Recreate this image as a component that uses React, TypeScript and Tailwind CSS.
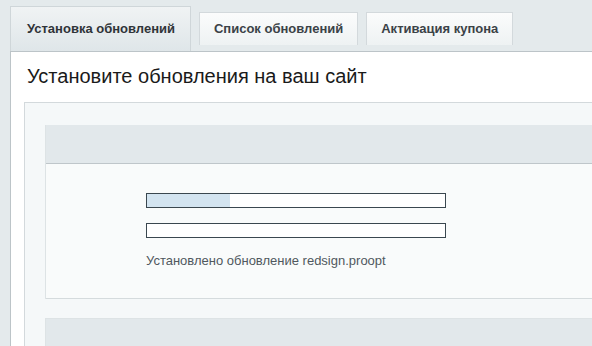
import React from "react";

const tabs = [
  { label: "Установка обновлений", active: true },
  { label: "Список обновлений", active: false },
  { label: "Активация купона", active: false },
];

function ProgressBar({ percent }: { percent: number }) {
  return (
    <div className="w-[300px] h-[15px] border border-[#3a474f] bg-white">
      <div className="h-full bg-[#d3e4f0]" style={{ width: `${percent}%` }} />
    </div>
  );
}

export default function App() {
  return (
    <div className="w-full h-[346px] overflow-hidden bg-[#e4eaec] pt-[6px] font-['Liberation_Sans',Arial,sans-serif]">
      {/* tabs */}
      <div className="flex items-start pl-[10px] gap-[7px] h-[45px]">
        {tabs.map((t) =>
          t.active ? (
            <div
              key={t.label}
              className="h-[45px] pl-[16px] pr-[15px] flex items-center border border-b-0 border-[#cfd6d9] bg-gradient-to-b from-[#f0f3f4] to-[#dfe6e9] text-[13px] font-bold text-[#2f3438]"
            >
              {t.label}
            </div>
          ) : (
            <div
              key={t.label}
              className="mt-[6px] h-[33px] pl-[14px] pr-[14px] ml-px flex items-center border border-b-0 border-[#d3d9dc] bg-gradient-to-b from-[#fbfcfc] to-[#eef2f3] text-[13px] font-bold text-[#3b4247]"
            >
              {t.label}
            </div>
          )
        )}
      </div>

      {/* panel */}
      <div className="ml-[10px] bg-white border-t border-l border-[#bcc4c8] h-full">
        <h1 className="pl-[16px] pt-[12px] text-[20px] leading-[24px] text-[#1a1a1a]">
          Установите обновления на ваш сайт
        </h1>

        <div className="mt-[14px] ml-[13px] bg-[#f5f8f9] border-t border-l border-[#d3d9dc] pt-[22px] pl-[20px] h-full">
          <div className="border-l border-[#dde3e5]">
            <div className="h-[39px] bg-[#e2e8eb] border-b border-[#bfc6ca]" />
            <div className="h-[135px] bg-[#f9fbfb] border-b border-[#d5dbdd] pt-[29px] pl-[100px]">
              <div className="flex flex-col gap-[15px]">
                <ProgressBar percent={28} />
                <ProgressBar percent={0} />
              </div>
              <p className="mt-[14px] text-[13px] leading-[18px] text-[#50585e]">
                Установлено обновление redsign.proopt
              </p>
            </div>
          </div>
          <div className="mt-[19px] h-[40px] bg-[#e2e8eb] border-l border-t border-[#dde3e5]" />
        </div>
      </div>
    </div>
  );
}
